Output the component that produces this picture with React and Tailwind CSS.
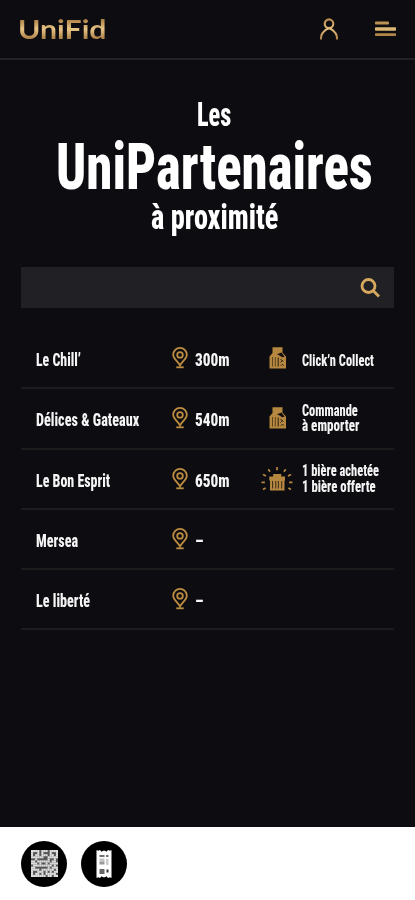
import { useLayoutEffect, useRef, useState } from 'react'

const partners = [
  { name: "Le Chill’", nameWidth: 45, distance: '300m', offer: 'bag', lines: [["Click’n Collect", 72]] },
  { name: 'Délices & Gateaux', nameWidth: 103, distance: '540m', offer: 'bag', lines: [['Commande', 56], ['à emporter', 57]] },
  { name: 'Le Bon Esprit', nameWidth: 74, distance: '650m', offer: 'gift', lines: [['1 bière achetée', 77], ['1 bière offerte', 74]] },
  { name: 'Mersea', nameWidth: 42, distance: '–' },
  { name: 'Le liberté', nameWidth: 54, distance: '–' },
]

const qrRows = [
  '1111011101111',
  '1001010001001',
  '1011011101101',
  '1111110011111',
  '0010000010010',
  '1101111110110',
  '1110100101111',
  '0111111111010',
  '1100000010111',
  '1111011111101',
  '1001110101011',
  '1011010111110',
  '1111111011011',
]

/** Squeezes its text horizontally so that it fills the given width */
function Condensed({ width, className = '', children }) {
  const ref = useRef(null)
  const [scale, setScale] = useState(1)

  useLayoutEffect(() => {
    setScale(width / ref.current.offsetWidth)
  }, [width, children])

  return (
    <span className="block" style={{ width }}>
      <span
        ref={ref}
        className={`inline-block origin-left whitespace-nowrap align-top ${className}`}
        style={{ transform: `scaleX(${scale})` }}
      >
        {children}
      </span>
    </span>
  )
}

function UserIcon() {
  return (
    <svg className="h-[22px] w-[20px]" viewBox="0 0 20 22" fill="none" stroke="url(#user-gold)" strokeWidth="2.1">
      <defs>
        <linearGradient id="user-gold" x1="0" y1="0" x2="0" y2="22" gradientUnits="userSpaceOnUse">
          <stop offset="0" stopColor="#b78a4e" />
          <stop offset="0.5" stopColor="#e3bd7b" />
          <stop offset="1" stopColor="#aa7d43" />
        </linearGradient>
      </defs>
      <circle cx="10" cy="5.7" r="4.3" />
      <path d="M2 21.500v-1.500C2 16 4.800 13.200 7.800 11.200 9.100 10.300 10.900 10.300 12.200 11.200 15.200 13.200 18 16 18 20v1.500" />
    </svg>
  )
}

function MenuIcon() {
  return (
    <svg className="h-[16px] w-[22px]" viewBox="0 0 22 16">
      <rect x="0" y="0.500" width="14" height="3" rx="0.800" fill="#bb9154" />
      <rect x="0" y="6.300" width="21" height="3.400" rx="0.800" fill="#dcb674" />
      <rect x="0" y="12.300" width="21" height="2.800" rx="0.800" fill="#b0864a" />
    </svg>
  )
}

function SearchIcon() {
  return (
    <svg className="h-[20px] w-[20px]" viewBox="0 0 20 20" fill="none" stroke="#d6a95f" strokeWidth="2.8">
      <circle cx="8.500" cy="8" r="6.500" />
      <path d="M13 12.500 19 18.600" />
    </svg>
  )
}

function PinIcon() {
  return (
    <svg className="h-[22px] w-[16px]" viewBox="0 0 16 22" fill="none" stroke="#bd8d42" strokeWidth="1.8">
      <path d="M8 18.400C6.500 14.600 1.200 11.900 1.200 7.700a6.800 6.800 0 0 1 13.600 0C14.800 11.900 9.500 14.600 8 18.400Z" />
      <circle cx="8" cy="7.900" r="2.800" />
      <path d="M4.300 20.300h7.400" />
    </svg>
  )
}

function BagIcon() {
  return (
    <svg className="h-[22px] w-[18px]" viewBox="0 0 18 22">
      <path d="M3.500 .3h10v5.500l3.500 3.700v12H.5V9.500l3-3.500z" fill="#b5873f" />
      <path d="M8 7.200l4.500-1.700 3.200 4.200-2.700.5-2-1.500z" fill="#14100f" />
      <path d="M3.500 10v9.500M6.300 10v9.500" stroke="#5e4522" strokeWidth="1" />
      <path d="M9.200 10.500v9" stroke="#2b2015" strokeWidth="1" />
      <path d="M11.500 12l2.500 2.500M14 13l-2.500 2.500M11.800 18.800l1-1.300M14.500 18.500l-1-1.500" stroke="#2b2015" strokeWidth="1" />
    </svg>
  )
}

function GiftIcon() {
  return (
    <svg className="h-[26px] w-[32px]" viewBox="0 0 32 26" fill="none" stroke="#b5873f">
      <path d="M9 13.500h14.500v11H9z" fill="#b5873f" stroke="none" />
      <path d="M8.300 10.500h15.700v4H8.300z" fill="#b5873f" stroke="none" />
      <path d="M12.200 8h8v3h-8z" fill="#b5873f" stroke="none" />
      <path d="M11.600 15v7.500M14.800 15v7.500M17.400 15v7.500M20.700 15v7.500" stroke="#2b2015" strokeWidth="0.900" />
      <path
        d="M16 1v3.200M7.300 3.200l1.800 2.600M24.700 3.200l-1.800 2.600M2 8.600l3 1.500M30 8.600l-3 1.500M.5 16.300h3.400M31.500 16.300h-3.400M2 23.500l2.600-1.500M30 23.500l-2.600-1.500"
        strokeWidth="1.700"
      />
    </svg>
  )
}

function QrIcon() {
  return (
    <svg className="h-[27px] w-[27px]" viewBox="0 0 13 13" fill="#e0e0e0">
      <rect width="13" height="13" fill="#555" />
      {qrRows.map((row, y) =>
        row.split('').map((cell, x) =>
          cell === '1' ? <rect key={`${x}-${y}`} x={x} y={y} width="1" height="1" /> : null
        )
      )}
    </svg>
  )
}

function TicketIcon() {
  return (
    <svg className="h-[30px] w-[16px]" viewBox="0 0 16 30">
      <path d="M.5 1l1.500.8L4 1l1.500 1.800L7 1.800h2l1.500 1L12 1l2 .8 1.500-.8v28l-1.500-.8-2 .8-1.500-1.800-1.500 1h-2l-1.500-1L4 29l-2-.8-1.500.8z" fill="#fff" />
      <path d="M3.500 7h5M10 7h2.500" stroke="#444" strokeWidth="1.300" />
      <path d="M3.500 9.500h5v3h-5z" fill="#c4c4c4" />
      <path d="M3.500 12.500h5v3h-5z" fill="#999" />
      <path d="M10 11h2.500M10 13h2.500M10 15h2.500" stroke="#999" strokeWidth="1" />
      <path d="M3.500 20h5v5h-5z" fill="#666" />
      <path d="M10.500 20.500h2v3h-2z" fill="#333" />
    </svg>
  )
}

function PartnerRow({ partner }) {
  return (
    <li className="flex h-[60.25px] items-center border-b-2 border-[#1d1c1d] pl-[15px] text-[17.500px] leading-5">
      <div className="w-[136px] pt-1">
        <Condensed width={partner.nameWidth}>{partner.name}</Condensed>
      </div>
      <div className="flex w-[91px] items-center gap-[7px]">
        <PinIcon />
        <div className="pt-1">
          <Condensed width={partner.distance === '–' ? 8 : 35}>{partner.distance}</Condensed>
        </div>
      </div>
      {partner.offer && (
        <>
          <div className="flex w-[30px] justify-center">
            {partner.offer === 'bag' ? <BagIcon /> : <div className="mr-[3px] shrink-0"><GiftIcon /></div>}
          </div>
          <div className={`pl-[9px] text-[16px] leading-[15.500px] ${partner.lines.length === 1 ? 'pt-1.5' : ''}`}>
            {partner.lines.map(([text, width]) => (
              <Condensed key={text} width={width}>{text}</Condensed>
            ))}
          </div>
        </>
      )}
    </li>
  )
}

export default function App() {
  return (
    <div className="flex h-[900px] w-[415px] flex-col overflow-hidden bg-[#0d0c11] font-['Roboto',sans-serif] font-extrabold font-stretch-condensed text-[#f5f5f5]">
      {/* Header */}
      <header className="flex h-[60px] shrink-0 items-center border-b-2 border-[#222123] pl-[18px] pr-[18px]">
        <div className="flex-1 font-['Lato',sans-serif] text-[26.500px] leading-8">
          <Condensed
            width={88}
            className="bg-linear-to-b from-[#ad8045] from-20% via-[#e8c586] via-50% to-[#a3763d] to-85% bg-clip-text font-bold text-transparent"
          >
            UniFid
          </Condensed>
        </div>
        <div className="mr-[36px]"><UserIcon /></div>
        <MenuIcon />
      </header>

      <main className="flex-1 px-[21px] pt-[35px]">
        {/* Title */}
        <h1 className="flex flex-col items-center text-white">
          <span className="ml-[13px] h-10 text-[33.500px] leading-10"><Condensed width={34}>Les</Condensed></span>
          <span className="ml-[14px] h-16 text-[65px] leading-16"><Condensed width={317}>UniPartenaires</Condensed></span>
          <span className="-mt-px ml-[14px] h-10 text-[35px] leading-10"><Condensed width={127}>à proximité</Condensed></span>
        </h1>

        {/* Search */}
        <div className="mt-[29px] flex h-[41px] items-center justify-end bg-[#212024] pr-[14px]">
          <SearchIcon />
        </div>

        {/* Partners */}
        <ul className="mt-[21px]">
          {partners.map((partner) => (
            <PartnerRow key={partner.name} partner={partner} />
          ))}
        </ul>
      </main>

      {/* Bottom bar */}
      <footer className="flex h-[73px] shrink-0 items-center gap-[14px] bg-white pl-[21px]">
        <div className="flex size-[46px] items-center justify-center rounded-full bg-black"><QrIcon /></div>
        <div className="flex size-[46px] items-center justify-center rounded-full bg-black"><TicketIcon /></div>
      </footer>
    </div>
  )
}
